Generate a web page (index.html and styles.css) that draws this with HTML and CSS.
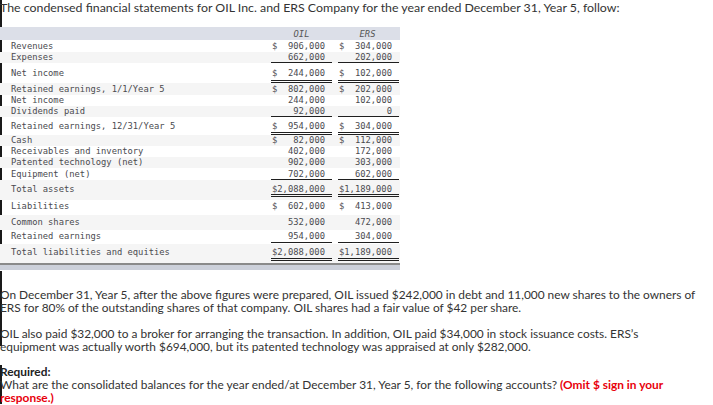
FILE: index.html
```html
<!DOCTYPE html>
<html>
<head>
<meta charset="utf-8">
<link rel="stylesheet" href="styles.css">
</head>
<body>
<div class="page">
  <p class="intro bar">The condensed financial statements for OIL Inc. and ERS Company for the year ended December 31, Year 5, follow:</p>
  <table class="fin">
    <colgroup><col class="c-lbl"><col class="c-oil"><col class="c-ers"></colgroup>
    <thead>
      <tr class="head"><th class="lbl"></th><th>OIL</th><th>ERS</th></tr>
    </thead>
    <tbody>
      <tr class="w h12 p1"><td class="lbl">Revenues</td><td><div class="v"><span>$</span><span>906,000</span></div></td><td><div class="v"><span>$</span><span>304,000</span></div></td></tr>
      <tr class="g h11 p0"><td class="lbl">Expenses</td><td><div class="v u1"><span></span><span>662,000</span></div></td><td><div class="v u1"><span></span><span>202,000</span></div></td></tr>
      <tr class="w h20 p5"><td class="lbl">Net income</td><td><div class="v u2 pb2"><span>$</span><span>244,000</span></div></td><td><div class="v u2 pb2"><span>$</span><span>102,000</span></div></td></tr>
      <tr class="g h12 p1"><td class="lbl">Retained earnings, 1/1/Year 5</td><td><div class="v"><span>$</span><span>802,000</span></div></td><td><div class="v"><span>$</span><span>202,000</span></div></td></tr>
      <tr class="w h11 p0"><td class="lbl">Net income</td><td><div class="v"><span></span><span>244,000</span></div></td><td><div class="v"><span></span><span>102,000</span></div></td></tr>
      <tr class="g h11 p0"><td class="lbl">Dividends paid</td><td><div class="v u1"><span></span><span>92,000</span></div></td><td><div class="v u1"><span></span><span>0</span></div></td></tr>
      <tr class="w h18 p4"><td class="lbl">Retained earnings, 12/31/Year 5</td><td><div class="v u2 pb1"><span>$</span><span>954,000</span></div></td><td><div class="v u2 pb1"><span>$</span><span>304,000</span></div></td></tr>
      <tr class="g h11 p0"><td class="lbl">Cash</td><td><div class="v"><span>$</span><span>82,000</span></div></td><td><div class="v"><span>$</span><span>112,000</span></div></td></tr>
      <tr class="w h11 p0"><td class="lbl">Receivables and inventory</td><td><div class="v"><span></span><span>402,000</span></div></td><td><div class="v"><span></span><span>172,000</span></div></td></tr>
      <tr class="g h11 p0"><td class="lbl">Patented technology (net)</td><td><div class="v"><span></span><span>902,000</span></div></td><td><div class="v"><span></span><span>303,000</span></div></td></tr>
      <tr class="w h12 p1"><td class="lbl">Equipment (net)</td><td><div class="v u1"><span></span><span>702,000</span></div></td><td><div class="v u1"><span></span><span>602,000</span></div></td></tr>
      <tr class="g h20 p4"><td class="lbl">Total assets</td><td><div class="v u2"><span>$2,088,000</span></div></td><td><div class="v u2"><span>$1,189,000</span></div></td></tr>
      <tr class="w h15 p1"><td class="lbl">Liabilities</td><td><div class="v"><span>$</span><span>602,000</span></div></td><td><div class="v"><span>$</span><span>413,000</span></div></td></tr>
      <tr class="g h15 p2"><td class="lbl">Common shares</td><td><div class="v"><span></span><span>532,000</span></div></td><td><div class="v"><span></span><span>472,000</span></div></td></tr>
      <tr class="w h14 p1"><td class="lbl">Retained earnings</td><td><div class="v u1 pb1"><span></span><span>954,000</span></div></td><td><div class="v u1 pb1"><span></span><span>304,000</span></div></td></tr>
      <tr class="g h20 p3"><td class="lbl">Total liabilities and equities</td><td><div class="v u2 pb1"><span>$2,088,000</span></div></td><td><div class="v u2 pb1"><span>$1,189,000</span></div></td></tr>
    </tbody>
    <tfoot>
      <tr class="foot"><td colspan="3"></td></tr>
    </tfoot>
  </table>
  <div class="sec1 bar">
    <p>On December 31, Year 5, after the above figures were prepared, OIL issued $242,000 in debt and 11,000 new shares to the owners of<br>ERS for 80% of the outstanding shares of that company. OIL shares had a fair value of $42 per share.</p>
    <p>OIL also paid $32,000 to a broker for arranging the transaction. In addition, OIL paid $34,000 in stock issuance costs. ERS’s<br>equipment was actually worth $694,000, but its patented technology was appraised at only $282,000.</p>
  </div>
  <div class="sec2 bar">
    <p><strong>Required:</strong><br>What are the consolidated balances for the year ended/at December 31, Year 5, for the following accounts? <strong class="red">(Omit $ sign in your<br>response.)</strong></p>
  </div>
</div>
</body>
</html>
```
FILE: styles.css
```css
html, body {
  margin: 0;
  padding: 0;
  background: #fff;
}
.page {
  width: 713px;
  font-family: "Lato", "Open Sans", sans-serif;
  color: #333;
}
.bar {
  box-shadow: inset 2px 0 0 #1a1a1a;
}
.intro {
  margin: 0;
  padding: 1px 0 0 0;
  height: 26px;
  font-size: 12.35px;
  line-height: 14px;
}
.fin {
  border-collapse: collapse;
  table-layout: fixed;
  width: 400px;
  font-family: "DejaVu Sans Mono", "Liberation Mono", monospace;
  font-size: 8.8px;
  color: #4a4a4f;
}
.c-lbl { width: 268px; }
.c-oil { width: 67px; }
.c-ers { width: 65px; }
.fin td, .fin th {
  padding: 0;
  vertical-align: top;
  line-height: 10px;
}
.fin .head {
  background: #dcdfe8;
  height: 13px;
}
.fin .head th {
  padding-top: 2px;
  font-style: italic;
  font-weight: normal;
  text-align: center;
  color: #555;
}
.fin .lbl {
  text-align: left;
  padding-left: 11px;
  white-space: nowrap;
}
.fin .w td:first-child {
  box-shadow: inset 2px 0 0 #1a1a1a;
}
.fin .g {
  background: #f5f5f5;
}
.fin .v {
  display: flex;
  justify-content: space-between;
  padding: 0 7px 0 1px;
  margin: 0 3px;
  white-space: nowrap;
}
.fin td:last-child .v {
  margin-right: 1px;
}
.fin .u1 {
  border-bottom: 1px solid #1f1f1f;
}
.fin .u2 {
  border-bottom: 3px double #1f1f1f;
}
.fin .pb1 { padding-bottom: 1px; }
.fin .pb2 { padding-bottom: 2px; }
.p0 td { padding-top: 0; }
.p1 td { padding-top: 1px; }
.p2 td { padding-top: 2px; }
.p3 td { padding-top: 3px; }
.p4 td { padding-top: 4px; }
.p5 td { padding-top: 5px; }
.h11 { height: 11px; }
.h12 { height: 12px; }
.h14 { height: 14px; }
.h15 { height: 15px; }
.h18 { height: 18px; }
.h20 { height: 20px; }
.fin .foot td {
  height: 5px;
  padding: 0;
  background: #ccd0da;
  border-top: 2px solid #8a8a8a;
}
.sec1, .sec2 {
  font-size: 11.9px;
  line-height: 13px;
}
.sec1 {
  margin-top: 1px;
  padding-top: 17px;
  height: 58px;
}
.sec1 p {
  margin: 0 0 13px 0;
}
.sec2 {
  margin-top: 19px;
}
.sec2 p {
  margin: 0;
}
strong {
  font-weight: bold;
  color: #222;
}
.red {
  color: #e8000b;
}
```
